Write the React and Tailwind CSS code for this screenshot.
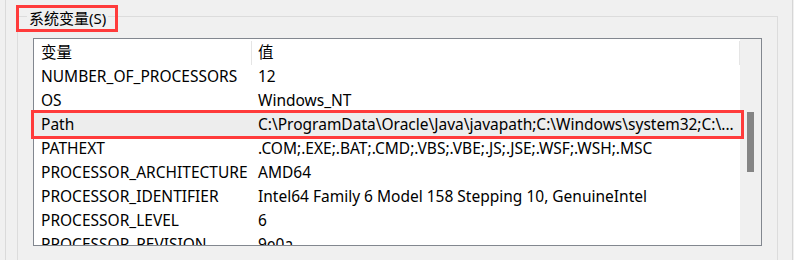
import React from 'react';

const rows = [
  ['NUMBER_OF_PROCESSORS', '12'],
  ['OS', 'Windows_NT'],
  ['Path', 'C:\\ProgramData\\Oracle\\Java\\javapath;C:\\Windows\\system32;C:\\...'],
  ['PATHEXT', '.COM;.EXE;.BAT;.CMD;.VBS;.VBE;.JS;.JSE;.WSF;.WSH;.MSC'],
  ['PROCESSOR_ARCHITECTURE', 'AMD64'],
  ['PROCESSOR_IDENTIFIER', 'Intel64 Family 6 Model 158 Stepping 10, GenuineIntel'],
  ['PROCESSOR_LEVEL', '6'],
  ['PROCESSOR_REVISION', '9e0a'],
];

const App = () => {
  return (
    <div
      className="w-[794px] h-[260px] bg-[#f0f0f0] flex overflow-hidden text-[15.5px] text-black"
      style={{ fontFamily: '"Noto Sans", "Noto Sans CJK SC", sans-serif' }}
    >
      <div className="w-[6px] shrink-0 border-r border-[#dadada]" />

      {/* group box */}
      <div className="relative ml-[11px] mt-[16px] w-[761px] h-[300px] shrink-0 border-t border-l border-r border-[#dcdcdc]">
        <div className="absolute -top-[12px] -left-[2px] w-[102px] h-[27px] border-[3px] border-[#ff3b3b] flex items-center">
          <span className="ml-[8px] px-[2px] bg-[#f0f0f0] leading-none text-[15px]">系统变量(S)</span>
        </div>

        {/* list */}
        <div className="ml-[15px] mt-[21px] w-[729px] h-[208px] border border-[#82878f] bg-white flex">
          <div className="w-[706px] flex flex-col [clip-path:inset(0_-10px_0_-10px)]">
            <div className="h-[26px] flex items-center shrink-0 pt-[2px]">
              <div className="w-[218px] h-full flex items-center pl-[7px] border-r border-[#e5e5e5]">变量</div>
              <div className="flex-1 pl-[6px]">值</div>
              <div className="h-full border-r border-[#e5e5e5]" />
            </div>
            {rows.map(([name, value]) => {
              const sel = name === 'Path';
              return (
                <div
                  key={name}
                  className={`relative h-[24px] flex items-center shrink-0 whitespace-nowrap ${sel ? 'bg-[#ededed]' : ''}`}
                >
                  <div className="w-[218px] pl-[7px]">{name}</div>
                  <div className="flex-1 pl-[6px]">{value}</div>
                  {sel && (
                    <div className="absolute -top-[3px] -bottom-[2px] -left-[3px] -right-[4px] border-[3px] border-[#ff3b3b]" />
                  )}
                </div>
              );
            })}
          </div>
          {/* scrollbar */}
          <div className="w-[21px] bg-[#f0f0f0] flex justify-center">
            <div className="mt-[73px] w-[7px] h-[60px] bg-[#858585]" />
          </div>
        </div>
      </div>

      <div className="ml-[14px] w-[1px] bg-[#d6d6d6]" />
    </div>
  );
};

export default App;
